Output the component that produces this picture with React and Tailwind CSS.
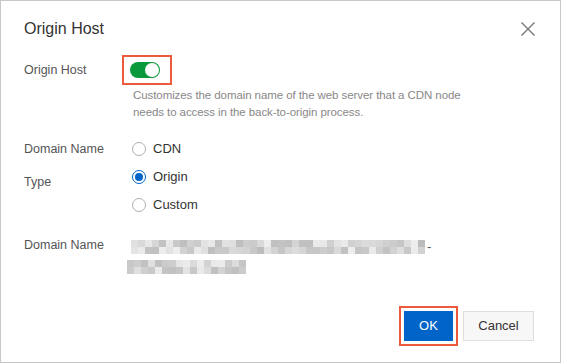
import React from "react";

function shades(n, seed) {
  const out = [];
  let s = seed;
  for (let i = 0; i < n; i++) {
    s = (s * 9301 + 49297) % 233280;
    const r = s / 233280;
    const v = Math.round(188 + r * 50);
    out.push(`rgb(${v},${v},${v})`);
  }
  return out;
}

function Mosaic({ cols, seed }) {
  const top = shades(cols, seed);
  const bot = shades(cols, seed + 77);
  return (
    <div className="flex flex-col">
      <div className="flex">
        {top.map((c, i) => (
          <div key={i} className="w-[7px] h-[7px]" style={{ background: c }} />
        ))}
      </div>
      <div className="flex">
        {bot.map((c, i) => (
          <div key={i} className="w-[7px] h-[7px]" style={{ background: c }} />
        ))}
      </div>
    </div>
  );
}

function Radio({ checked, label }) {
  return (
    <div className="h-[28px] flex items-center">
      {checked ? (
        <span className="ml-[10px] w-[14px] h-[14px] rounded-full border border-[#0064c8] flex items-center justify-center box-border">
          <span className="w-[8px] h-[8px] rounded-full bg-[#0064c8]" />
        </span>
      ) : (
        <span className="ml-[10px] w-[14px] h-[14px] rounded-full border border-[#b0b0b0] box-border" />
      )}
      <span className="ml-[7px] text-[13px] text-[#333] leading-[20px]">{label}</span>
    </div>
  );
}

export default function App() {
  return (
    <div
      className="w-[561px] h-[363px] box-border border border-[#c8c8c8] bg-white flex flex-col"
      style={{ fontFamily: '"Liberation Sans", Arial, sans-serif' }}
    >
      <div className="flex items-center justify-between pl-[23px] pr-[24px] pt-[17px]">
        <div className="text-[16px] leading-[22px] text-[#333]">Origin Host</div>
        <svg width="16" height="16" viewBox="0 0 16 16" fill="none">
          <path d="M1.5 1.5L14.5 14.5M14.5 1.5L1.5 14.5" stroke="#777" strokeWidth="1.4" />
        </svg>
      </div>

      <div className="flex pl-[23px] mt-[15px]">
        <div className="w-[98px] h-[30px] flex items-center text-[12.5px] text-[#555]">Origin Host</div>
        <div className="flex flex-col">
          <div className="w-[50px] h-[30px] border-2 border-[#eb5a3c] box-border flex items-center pl-[6px]">
            <div className="w-[30px] h-[16px] rounded-full bg-[#0a9a3c] flex items-center justify-end pr-[1px]">
              <div className="w-[14px] h-[14px] rounded-full bg-white" />
            </div>
          </div>
          <div className="ml-[11px] mt-[2px] text-[11.5px] tracking-[-0.08px] leading-[17px] text-[#888] w-[345px]">
            Customizes the domain name of the web server that a CDN node needs to access in the back-to-origin process.
          </div>
        </div>
      </div>

      <div className="flex pl-[23px] mt-[14px]">
        <div className="w-[98px] flex flex-col pt-[4px] text-[12.5px] leading-[20px] text-[#555]">
          <div>Domain Name</div>
          <div className="mt-[13px]">Type</div>
        </div>
        <div className="flex flex-col">
          <Radio label="CDN" />
          <Radio label="Origin" checked />
          <Radio label="Custom" />
        </div>
      </div>

      <div className="flex pl-[23px] mt-[16px]">
        <div className="w-[98px] text-[12.5px] leading-[20px] text-[#555]">Domain Name</div>
        <div className="flex flex-col pt-[5px]">
          <div className="flex items-center ml-[9px]">
            <Mosaic cols={42} seed={13} />
            <span className="ml-[2px] text-[13px] text-[#555] leading-[14px]">-</span>
          </div>
          <div className="ml-[5px] mt-[6px]">
            <Mosaic cols={17} seed={51} />
          </div>
        </div>
      </div>

      <div className="mt-auto flex justify-end items-center gap-[5px] pr-[26px] pb-[16px]">
        <div className="border-2 border-[#eb5a3c] p-[3px]">
          <div className="w-[49px] h-[30px] bg-[#0064c8] text-white text-[13px] flex items-center justify-center">OK</div>
        </div>
        <div className="w-[71px] h-[30px] box-border border border-[#dedede] bg-[#f7f7f7] text-[#333] text-[13px] flex items-center justify-center">
          Cancel
        </div>
      </div>
    </div>
  );
}
